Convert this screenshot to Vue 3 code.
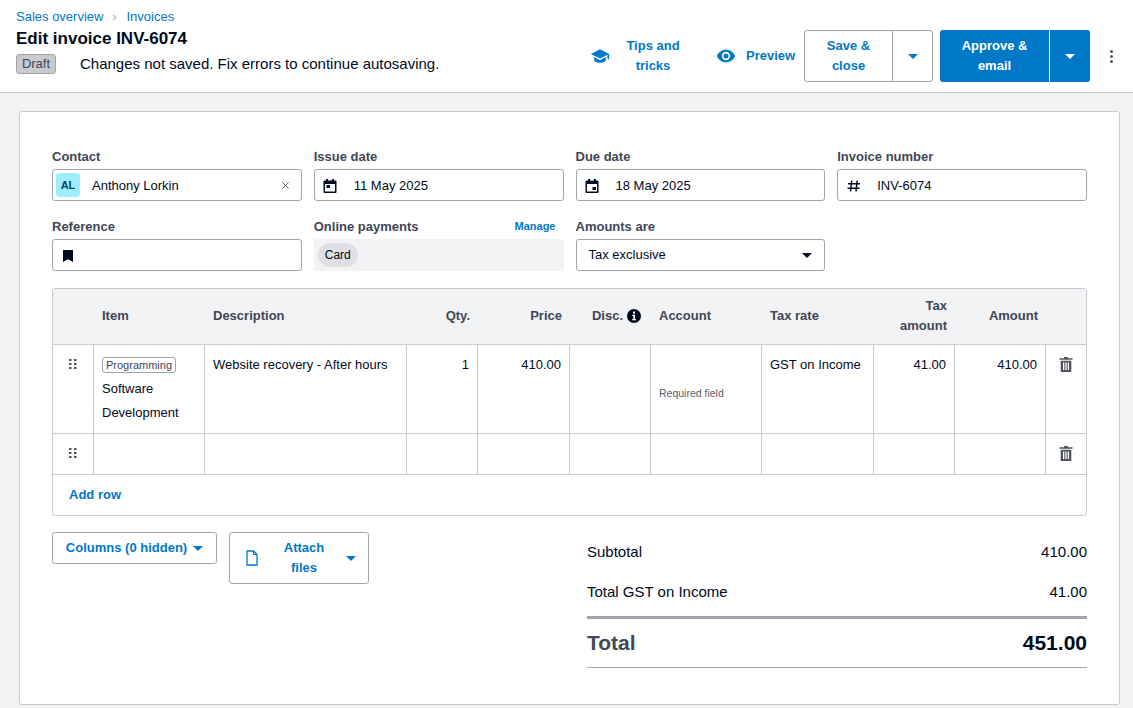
<script setup>
const rows = [
  { id: 1, code: 'Programming', name: 'Software Development', desc: 'Website recovery - After hours', qty: '1', price: '410.00', account: 'Required field', tax: 'GST on Income', taxAmount: '41.00', amount: '410.00' },
  { id: 2 },
];
</script>

<template>
  <div class="page">
    <header class="top">
      <div class="top-left">
        <nav class="crumbs">
          <a>Sales overview</a>
          <svg class="crumb-sep" viewBox="0 0 8 8"><path d="M2.500 1l3 3-3 3" fill="none" stroke="#6b6f7b" stroke-width="1" /></svg>
          <a>Invoices</a>
        </nav>
        <h1>Edit invoice INV-6074</h1>
        <div class="status">
          <span class="draft">Draft</span>
          <span class="save-msg">Changes not saved. Fix errors to continue autosaving.</span>
        </div>
      </div>
      <div class="actions">
        <a class="link-btn tips">
          <svg class="icon-lg" viewBox="0 0 24 24"><path d="M5 13.180v3.600c0 1.900 3.100 3.400 7 3.400s7-1.500 7-3.400v-3.600L12 17l-7-3.820zM12 4L1 9.500 12 15l9-4.600V16h2V9.500L12 4z" fill="#0078c8" /></svg>
          <span class="tips-text">Tips and tricks</span>
        </a>
        <a class="link-btn preview">
          <svg class="icon-lg" viewBox="0 0 24 24"><path d="M12 4.500C7 4.500 2.700 7.600 1 12c1.700 4.400 6 7.500 11 7.500s9.300-3.100 11-7.500c-1.700-4.400-6-7.500-11-7.500zM12 17a5 5 0 1 1 0-10 5 5 0 0 1 0 10zm0-8a3 3 0 1 0 0 6 3 3 0 0 0 0-6z" fill="#0078c8" /></svg>
          <span>Preview</span>
        </a>
        <div class="split outline">
          <button class="split-main">Save &amp; close</button>
          <button class="split-caret"><i class="caret blue"></i></button>
        </div>
        <div class="split solid">
          <button class="split-main">Approve &amp; email</button>
          <button class="split-caret"><i class="caret white"></i></button>
        </div>
        <button class="kebab"><i></i><i></i><i></i></button>
      </div>
    </header>

    <main class="card">
      <div class="fields">
        <div class="field">
          <label>Contact</label>
          <div class="input contact">
            <span class="avatar">AL</span>
            <span class="contact-name">Anthony Lorkin</span>
            <svg class="clear" viewBox="0 0 10 10"><path d="M1.500 1.500l7 7M8.500 1.500l-7 7" stroke="#5c606d" stroke-width="1.100" /></svg>
          </div>
        </div>
        <div class="field">
          <label>Issue date</label>
          <div class="input">
            <svg class="field-icon" viewBox="0 0 14 14"><path d="M3 0h2v1.500h4V0h2v1.500h1.500a1 1 0 0 1 1 1V13a1 1 0 0 1-1 1h-11a1 1 0 0 1-1-1V2.500a1 1 0 0 1 1-1H3zM2 5v7.500h10V5z" fill="#000a1e" /><rect x="3.500" y="6" width="3.500" height="3" fill="#000a1e" /></svg>
            <span>11 May 2025</span>
          </div>
        </div>
        <div class="field">
          <label>Due date</label>
          <div class="input">
            <svg class="field-icon" viewBox="0 0 14 14"><path d="M3 0h2v1.500h4V0h2v1.500h1.500a1 1 0 0 1 1 1V13a1 1 0 0 1-1 1h-11a1 1 0 0 1-1-1V2.500a1 1 0 0 1 1-1H3zM2 5v7.500h10V5z" fill="#000a1e" /><rect x="7.500" y="8" width="3.500" height="3" fill="#000a1e" /></svg>
            <span>18 May 2025</span>
          </div>
        </div>
        <div class="field">
          <label>Invoice number</label>
          <div class="input">
            <svg class="field-icon" viewBox="0 0 14 14"><path d="M5.700 1.500L4.500 12.500M11.200 1.500L10 12.500M2 4.800h12M1.500 9.200h12" fill="none" stroke="#000a1e" stroke-width="1.500" /></svg>
            <span>INV-6074</span>
          </div>
        </div>

        <div class="field">
          <label>Reference</label>
          <div class="input">
            <svg class="field-icon" viewBox="0 0 14 14"><path d="M2 1h10v12L7 10.200 2 13z" fill="#000a1e" /></svg>
          </div>
        </div>
        <div class="field">
          <div class="label-row">
            <label>Online payments</label>
            <a class="manage">Manage</a>
          </div>
          <div class="payments"><span class="pill">Card</span></div>
        </div>
        <div class="field">
          <label>Amounts are</label>
          <div class="input select">
            <span>Tax exclusive</span>
            <i class="caret dark"></i>
          </div>
        </div>
      </div>

      <section class="table">
        <div class="row head">
          <div class="cell"></div>
          <div class="cell">Item</div>
          <div class="cell">Description</div>
          <div class="cell right">Qty.</div>
          <div class="cell right">Price</div>
          <div class="cell right disc">
            Disc.
            <svg class="info" viewBox="0 0 14 14"><circle cx="7" cy="7" r="7" fill="#000a1e" /><rect x="6" y="2.600" width="2" height="2" fill="#fff" /><path d="M5.300 5.800H8v4.200h1v1.200H5.200V10h1.100V7H5.300z" fill="#fff" /></svg>
          </div>
          <div class="cell">Account</div>
          <div class="cell">Tax rate</div>
          <div class="cell right">Tax amount</div>
          <div class="cell right">Amount</div>
          <div class="cell"></div>
        </div>

        <div v-for="row in rows" :key="row.id" class="row body" :class="row.code ? 'filled' : 'empty'">
          <div class="cell handle">
            <svg class="drag" viewBox="0 0 8 10"><g fill="#50545f"><rect x="0" y="0" width="2.500" height="2" /><rect x="5" y="0" width="2.500" height="2" /><rect x="0" y="4" width="2.500" height="2" /><rect x="5" y="4" width="2.500" height="2" /><rect x="0" y="8" width="2.500" height="2" /><rect x="5" y="8" width="2.500" height="2" /></g></svg>
          </div>
          <div class="cell item">
            <template v-if="row.code">
              <span class="code">{{ row.code }}</span>
              <span class="item-name">{{ row.name }}</span>
            </template>
          </div>
          <div class="cell">{{ row.desc }}</div>
          <div class="cell right">{{ row.qty }}</div>
          <div class="cell right">{{ row.price }}</div>
          <div class="cell"></div>
          <div class="cell"><span v-if="row.account" class="required">{{ row.account }}</span></div>
          <div class="cell">{{ row.tax }}</div>
          <div class="cell right">{{ row.taxAmount }}</div>
          <div class="cell right">{{ row.amount }}</div>
          <div class="cell handle">
            <svg class="trash" viewBox="0 0 14 15"><path d="M5 0h4v1.200h4.500v1.500H.5V1.200H5zM1.700 3.700h10.600V15H1.700zM4 5.500V13h1.300V5.500zm2.350 0V13h1.300V5.500zm2.350 0V13H10V5.500z" fill="#50545f" fill-rule="evenodd" /></svg>
          </div>
        </div>

        <div class="add-row"><a>Add row</a></div>
      </section>

      <div class="bottom">
        <div class="bottom-btns">
          <button class="btn columns">Columns (0 hidden) <i class="caret blue"></i></button>
          <button class="btn attach">
            <svg class="file" viewBox="0 0 12 16"><path d="M1 1h6.500L11 4.500V15H1z" fill="none" stroke="#0078c8" stroke-width="1.300" /><path d="M7.500 1v3.500H11" fill="none" stroke="#0078c8" stroke-width="1" /></svg>
            <span class="attach-text">Attach files</span>
            <i class="caret blue"></i>
          </button>
        </div>
        <div class="totals">
          <div class="total-line"><span>Subtotal</span><span>410.00</span></div>
          <div class="total-line"><span>Total GST on Income</span><span>41.00</span></div>
          <div class="grand"><span class="grand-label">Total</span><span>451.00</span></div>
        </div>
      </div>
    </main>
  </div>
</template>

<style>
html,
body {
  margin: 0;
  background: #f2f3f5;
}
</style>

<style scoped>
.page {
  height: 708px;
  overflow: hidden;
  background: #f2f3f5;
  color: #000a1e;
  font-family: "Liberation Sans", Arial, sans-serif;
  font-size: 14px;
  line-height: 20px;
}

a {
  color: #0078c8;
  text-decoration: none;
}

button {
  font-family: inherit;
  cursor: pointer;
}

.top {
  display: flex;
  justify-content: space-between;
  height: 92px;
  padding: 0 0 0 16px;
  background: #fff;
  border-bottom: 1px solid #c8cacf;
}

.crumbs {
  display: flex;
  align-items: center;
  gap: 8px;
  height: 16px;
  margin-top: 9px;
  font-size: 13px;
  line-height: 16px;
}

.crumb-sep {
  width: 7px;
  height: 7px;
}

h1 {
  margin: 4px 0 0;
  font-size: 17px;
  line-height: 20px;
  font-weight: 700;
}

.status {
  display: flex;
  align-items: center;
  margin-top: 5px;
}

.draft {
  box-sizing: border-box;
  width: 40px;
  height: 20px;
  border: 1px solid #a3a5ae;
  border-radius: 3px;
  background: #c8cacf;
  color: #404756;
  font-size: 13px;
  line-height: 17px;
  text-align: center;
}

.save-msg {
  margin-left: 24px;
  font-size: 15px;
}

.actions {
  display: flex;
  align-items: center;
  padding-top: 20px;
  box-sizing: border-box;
  height: 92px;
  width: 543px;
}

.link-btn {
  display: flex;
  align-items: center;
  font-size: 13px;
  font-weight: 700;
}

.icon-lg {
  width: 20px;
  height: 20px;
  flex: none;
}

.tips {
  width: 126px;
}

.tips-text {
  width: 68px;
  margin-left: 9px;
  text-align: center;
}

.preview {
  gap: 10px;
  width: 88px;
}

.split {
  display: flex;
  box-sizing: border-box;
  height: 52px;
  border-radius: 3px;
  font-size: 13px;
  font-weight: 700;
}

.split button {
  border: 0;
  background: none;
  font: inherit;
  color: inherit;
  line-height: 20px;
  padding: 0;
}

.outline {
  width: 129px;
  border: 1px solid #a3a5ae;
  color: #0078c8;
  background: #fff;
}

.outline .split-main {
  width: 88px;
  padding: 0 18px;
  border-right: 1px solid #a3a5ae;
}

.solid {
  width: 150px;
  margin-left: 7px;
  background: #0078c8;
  color: #fff;
}

.solid .split-main {
  width: 110px;
  padding: 0 18px;
  border-right: 1px solid #fff;
}

.split-caret {
  flex: 1;
  display: flex;
  align-items: center;
  justify-content: center;
}

.caret {
  display: inline-block;
  width: 0;
  height: 0;
  border-left: 5px solid transparent;
  border-right: 5px solid transparent;
  border-top: 5px solid currentColor;
}

.caret.blue {
  color: #0078c8;
}

.caret.white {
  color: #fff;
}

.caret.dark {
  color: #000a1e;
}

.kebab {
  display: flex;
  flex-direction: column;
  align-items: center;
  gap: 2px;
  width: 20px;
  margin-left: 11px;
  padding: 0;
  border: 0;
  background: none;
}

.kebab i {
  width: 3px;
  height: 3px;
  border-radius: 50%;
  background: #50545f;
}

.card {
  box-sizing: border-box;
  height: 594px;
  margin: 18px 13px 0 19px;
  padding: 38px 32px 0;
  background: #fff;
  border: 1px solid #c8cacf;
  border-radius: 3px;
}

.fields {
  display: grid;
  grid-template-columns: repeat(4, 1fr);
  gap: 19px 12px;
}

.field label {
  display: block;
  margin-bottom: 5px;
  color: #404756;
  font-size: 13px;
  font-weight: 700;
  line-height: 14px;
}

.label-row {
  display: flex;
  justify-content: space-between;
  align-items: flex-start;
}

.manage {
  padding-right: 8px;
  font-size: 11px;
  font-weight: 700;
  line-height: 12px;
}

.input {
  display: flex;
  align-items: center;
  box-sizing: border-box;
  height: 32px;
  padding: 1px 12px 0 8px;
  border: 1px solid #a3a5ae;
  border-radius: 3px;
  background: #fff;
  font-size: 13px;
}

.field-icon {
  flex: none;
  width: 14px;
  height: 14px;
  margin-right: 17px;
}

.contact {
  padding: 0 11px 0 3px;
}

.avatar {
  flex: none;
  width: 24px;
  height: 24px;
  border-radius: 3px;
  background: #9deffe;
  color: #0e4457;
  font-size: 11px;
  font-weight: 700;
  line-height: 24px;
  text-align: center;
}

.contact-name {
  flex: 1;
  margin-left: 12px;
  padding-top: 1px;
}

.clear {
  width: 9px;
  height: 9px;
}

.payments {
  display: flex;
  align-items: center;
  height: 32px;
  padding: 0 4px;
  box-sizing: border-box;
  border-radius: 3px;
  background: #f2f3f5;
}

.pill {
  height: 24px;
  padding: 0 7px;
  border-radius: 12px;
  background: #dfe0e3;
  font-size: 12px;
  line-height: 24px;
}

.select {
  justify-content: space-between;
  padding: 0 12px;
}

.table {
  margin-top: 17px;
  border: 1px solid #c8cacf;
  border-radius: 3px;
}

.row {
  display: grid;
  box-sizing: border-box;
  grid-template-columns: 41px 111px 202px 71px 92px 81px 111px 112px 81px 91px 1fr;
  border-bottom: 1px solid #c8cacf;
}

.head {
  height: 56px;
  padding-bottom: 2px;
  background: #f2f3f5;
  color: #404756;
  font-size: 13px;
  font-weight: 700;
}

.head .cell {
  display: flex;
  align-items: center;
  padding: 0 8px;
}

.head .cell.right {
  justify-content: flex-end;
  text-align: right;
}

.head .cell.disc {
  gap: 4px;
  padding-right: 10px;
  white-space: nowrap;
}

.info {
  width: 14px;
  height: 14px;
}

.filled {
  height: 89px;
}

.empty {
  height: 41px;
}

.body {
  font-size: 13px;
}

.body .cell {
  padding: 10px 8px 0;
  border-right: 1px solid #c8cacf;
}

.body .cell:last-child {
  border-right: 0;
}

.right {
  text-align: right;
}

.body .handle {
  display: flex;
  justify-content: center;
  padding: 14px 0 0;
}

.drag {
  width: 8px;
  height: 10px;
}

.trash {
  width: 14px;
  height: 15px;
  margin-top: -2px;
}

.code {
  display: inline-block;
  box-sizing: border-box;
  height: 16px;
  padding: 0 3px;
  margin-top: 2px;
  border: 1px solid #a3a5ae;
  border-radius: 3px;
  color: #404756;
  font-size: 11px;
  line-height: 14px;
}

.body .item {
  padding-top: 10px;
}

.item-name {
  display: block;
  margin-top: 2px;
  line-height: 24px;
}

.required {
  display: block;
  margin-top: 30px;
  color: #595d6a;
  font-size: 10.500px;
  line-height: 16px;
}

.add-row {
  height: 40px;
  padding-left: 16px;
  font-size: 13px;
  font-weight: 700;
  line-height: 40px;
}

.bottom {
  display: flex;
  justify-content: space-between;
  margin-top: 16px;
}

.bottom-btns {
  display: flex;
  align-items: flex-start;
  gap: 12px;
}

.btn {
  box-sizing: border-box;
  border: 1px solid #a3a5ae;
  border-radius: 3px;
  background: #fff;
  color: #0078c8;
  font-size: 13px;
  font-weight: 700;
  line-height: 20px;
}

.columns {
  width: 165px;
  height: 32px;
  padding: 0;
  display: flex;
  align-items: center;
  justify-content: center;
  gap: 6px;
}

.attach {
  display: flex;
  align-items: center;
  width: 140px;
  height: 52px;
  padding: 0 12px 0 16px;
}

.file {
  flex: none;
  width: 12px;
  height: 16px;
}

.attach-text {
  flex: 1;
  padding: 0 20px 0 24px;
}

.totals {
  width: 500px;
  font-size: 15px;
}

.total-line {
  display: flex;
  justify-content: space-between;
  height: 40px;
  line-height: 40px;
}

.grand {
  display: flex;
  justify-content: space-between;
  align-items: center;
  box-sizing: border-box;
  height: 52px;
  margin-top: 4px;
  border-top: 3px solid #a3a5ae;
  border-bottom: 1px solid #a3a5ae;
  font-size: 21px;
  font-weight: 700;
}

.grand-label {
  color: #404756;
}
</style>
